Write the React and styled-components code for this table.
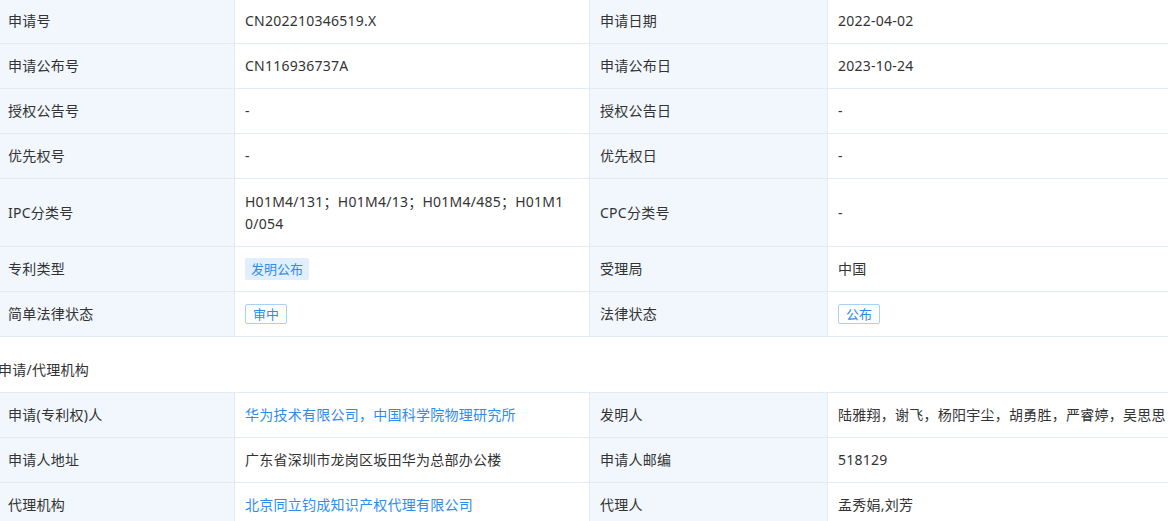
import React from "react";
import styled, { createGlobalStyle } from "styled-components";

const GlobalStyle = createGlobalStyle`
  html, body {
    margin: 0;
    padding: 0;
    background: #fff;
    overflow: hidden;
  }
  body {
    font-family: "Noto Sans", "Noto Sans CJK SC", sans-serif;
    font-size: 14px;
    letter-spacing: 0.25px;
    color: #333;
  }
`;

const Page = styled.div`
  width: 1185px;
  margin: -2px 0 0 -2px;
`;

const Table = styled.div`
  display: grid;
  grid-template-columns: 237px 355px 238px 355px;
  border-top: 1px solid #e3ecf5;
`;

// wide cells (IPC codes) wrap a bit earlier and get one extra pixel on top
const Cell = styled.div`
  padding: ${(p) => (p.$wide ? "12px 22px 11px 10px" : "11px 10px")};
  line-height: 22px;
  border-bottom: 1px solid #e3ecf5;
  border-right: 1px solid #e3ecf5;
  display: flex;
  align-items: center;
  word-break: break-all;
  white-space: ${(p) => (p.$nowrap ? "nowrap" : "normal")};
  background: ${(p) => (p.$label ? "#f1f7fc" : "#fff")};
  color: ${(p) => (p.$link ? "#2d8cf0" : "#333")};
`;

const SectionTitle = styled.div`
  margin: 22px 0 11px;
  line-height: 22px;
  font-size: 14px;
  color: #333;
`;

const Tag = styled.span`
  display: inline-block;
  line-height: 18px;
  font-size: 13px;
  letter-spacing: 0;
  color: #2d8cf0;
  border-radius: 2px;
  padding: ${(p) => (p.$outline ? "0 7px" : "2px 6px")};
  background: ${(p) => (p.$outline ? "#fff" : "#e1effc")};
  border: ${(p) => (p.$outline ? "1px solid #a9d0f7" : "none")};
`;

const Row = ({ l1, v1, l2, v2, link1, link2, wide }) => (
  <>
    <Cell $label>{l1}</Cell>
    <Cell $link={link1} $wide={wide}>{v1}</Cell>
    <Cell $label>{l2}</Cell>
    <Cell $link={link2} $nowrap>{v2}</Cell>
  </>
);

export default function App() {
  return (
    <Page>
      <GlobalStyle />
      <Table>
        <Row l1="申请号" v1="CN202210346519.X" l2="申请日期" v2="2022-04-02" />
        <Row l1="申请公布号" v1="CN116936737A" l2="申请公布日" v2="2023-10-24" />
        <Row l1="授权公告号" v1="-" l2="授权公告日" v2="-" />
        <Row l1="优先权号" v1="-" l2="优先权日" v2="-" />
        <Row
          l1="IPC分类号"
          v1="H01M4/131；H01M4/13；H01M4/485；H01M10/054"
          wide
          l2="CPC分类号"
          v2="-"
        />
        <Row
          l1="专利类型"
          v1={<Tag>发明公布</Tag>}
          l2="受理局"
          v2="中国"
        />
        <Row
          l1="简单法律状态"
          v1={<Tag $outline>审中</Tag>}
          l2="法律状态"
          v2={<Tag $outline>公布</Tag>}
        />
      </Table>
      <SectionTitle>申请/代理机构</SectionTitle>
      <Table>
        <Row
          l1="申请(专利权)人"
          v1="华为技术有限公司，中国科学院物理研究所"
          link1
          l2="发明人"
          v2="陆雅翔，谢飞，杨阳宇尘，胡勇胜，严睿婷，吴思思"
        />
        <Row l1="申请人地址" v1="广东省深圳市龙岗区坂田华为总部办公楼" l2="申请人邮编" v2="518129" />
        <Row l1="代理机构" v1="北京同立钧成知识产权代理有限公司" link1 l2="代理人" v2="孟秀娟,刘芳" />
      </Table>
    </Page>
  );
}
